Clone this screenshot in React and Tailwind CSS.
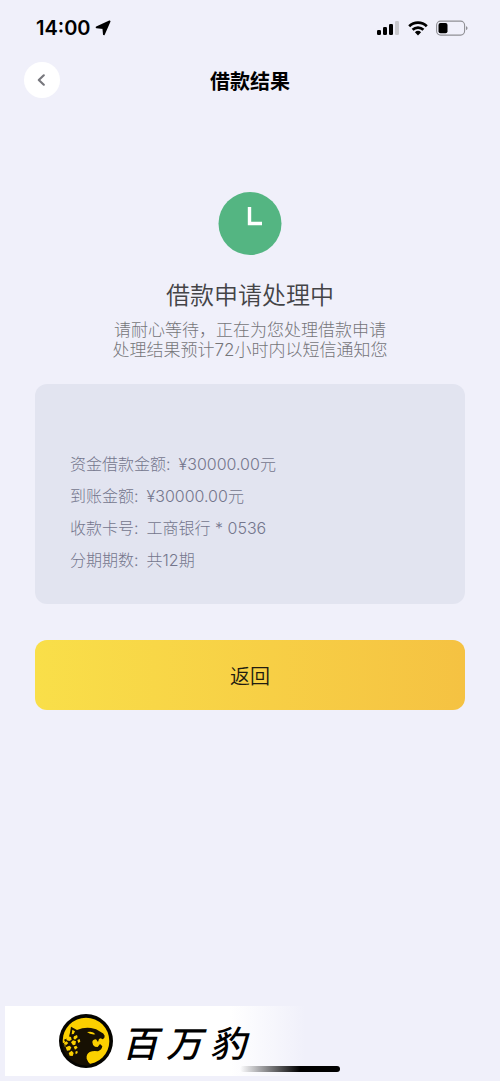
import React from "react";

const details = [
  ["资金借款金额", "¥30000.00元"],
  ["到账金额", "¥30000.00元"],
  ["收款卡号", "工商银行 * 0536"],
  ["分期期数", "共12期"],
];

function StatusBar() {
  return (
    <div className="flex h-14 items-center justify-between pr-8 pl-9">
      <div className="flex items-center gap-1 font-['Inter','Noto_Sans_CJK_SC',sans-serif] text-xl font-semibold text-black">
        <span>14:00</span>
        <svg className="h-4 w-4" viewBox="0 0 16 16" aria-hidden="true">
          <path
            d="M14.6 1.4 8.9 14.3 8.3 8.2 1.6 7.4Z"
            stroke="#000"
            strokeWidth="1.8"
            strokeLinejoin="round"
          />
        </svg>
      </div>
      <div className="flex items-center gap-2">
        <svg className="h-4 w-6" viewBox="0 0 24 16" aria-hidden="true">
          <rect x="1" y="10" width="4" height="5" rx="1.2" />
          <rect x="7" y="7" width="4" height="8" rx="1.2" />
          <rect x="13" y="4" width="4" height="11" rx="1.2" />
          <rect x="19" y="1" width="4" height="14" rx="1.2" fill="#c9c9ce" />
        </svg>
        <svg className="h-4 w-5" viewBox="0 0 20 16" aria-hidden="true">
          <g fill="none" stroke="#000" strokeWidth="2.7">
            <path d="M1.2 6.3a12.6 12.6 0 0 1 17.6 0" />
            <path d="M4.6 9.8a7.7 7.7 0 0 1 10.8 0" />
          </g>
          <path d="M6.9 12.3a4.5 4.5 0 0 1 6.2 0L10 15.5Z" />
        </svg>
        <svg className="h-4 w-8" viewBox="0 0 32 16" aria-hidden="true">
          <rect x=".6" y="1.1" width="28" height="14" rx="4" fill="none" stroke="#8f8f94" strokeWidth="1.1" />
          <rect x="2.5" y="3" width="9" height="10.3" rx="2" />
          <path d="M30 6.3c2 .4 2 3.4 0 3.8Z" fill="#8f8f94" />
        </svg>
      </div>
    </div>
  );
}

function PantherLogo() {
  return (
    <svg className="size-14 shrink-0" viewBox="4 4 168 168" role="img" aria-label="百万豹">
      <circle cx="88" cy="88" r="81" fill="#050400" />
      <circle cx="88" cy="88" r="70" fill="#fcd000" />
      <path
        fill="#171003"
        d="M43 45 61 55Q82 46 103 49Q120 51 131 60Q142 64 144 72Q145 79 138 83L132 80L127 82L124 91L118 83Q108 83 107 91Q107 101 115 105L123 106L130 97L137 104Q136 114 124 119Q109 117 99 121Q88 127 90 141Q93 151 103 160Q80 165 58 154Q33 142 20 115Q16 103 18 95L26 92L22 84L36 78L40 63Z"
      />
      <path d="m91 61 10-1q10 1 15 8-15 2-25-7Z" fill="#fcd000" />
      <g fill="#fcd000">
        <path d="m47 54 8 5-4 8-6 1ZM29 81l6-7 8 2 2 8-7 4-8-2ZM52 74l9-4 2 7-8 7-5-4ZM24 92l5-3 6 5-6 6-8-2ZM43 92l6-6 9 3-2 10-7 2ZM62 85l7-3 2 8-6 4ZM27 107l11-5 6 5-4 9-9 1ZM51 105l8-3 4 6-8 6ZM36 124l9-7 6 7-3 9-9-1ZM56 120l6-3 1 7-6 4ZM22 103l4-3 1 5Z" />
      </g>
    </svg>
  );
}

export default function App() {
  return (
    <div className="flex min-h-screen flex-col bg-[#f0f0fa] font-['Inter','Noto_Sans_CJK_SC',sans-serif]">
      <StatusBar />
      <header className="grid h-12 grid-cols-[1fr_auto_1fr] items-center px-6">
        <button type="button" aria-label="返回上一页" className="flex size-9 items-center justify-center rounded-full bg-white">
          <svg className="size-4" viewBox="0 0 16 16" fill="none" stroke="#77777d" strokeWidth="2.2" strokeLinecap="round" strokeLinejoin="round" aria-hidden="true">
            <path d="m9.8 3.3-5 4.7 5 4.7" />
          </svg>
        </button>
        <h1 className="pt-1 text-xl font-bold text-black">借款结果</h1>
      </header>

      <main className="flex flex-col px-[35px] pt-22">
        <svg className="size-16 self-center" viewBox="0 0 64 64" aria-hidden="true">
          <circle cx="32" cy="31.5" r="31.5" fill="#54b582" />
          <path d="M31.5 15v16.5H44" fill="none" stroke="#fff" strokeWidth="3.4" />
        </svg>
        <h2 className="mt-5 text-center text-2xl leading-10 font-[350] text-[#444447]">借款申请处理中</h2>
        <p className="mt-1 text-center text-[17px] leading-5 font-light text-[#757579]">
          请耐心等待，正在为您处理借款申请
          <br />
          处理结果预计72小时内以短信通知您
        </p>
        <dl className="mt-6 rounded-xl bg-[#e2e4f0] px-[35px] pt-16 pb-7 text-base leading-8 font-light text-[#74768d]">
          {details.map(([label, value]) => (
            <div key={label} className="flex gap-2">
              <dt>{label}:</dt>
              <dd>{value}</dd>
            </div>
          ))}
        </dl>
        <button type="button" className="mt-9 h-[70px] rounded-xl bg-linear-to-r from-[#f9df49] to-[#f5c242] pt-1 text-xl font-[350] text-[#211b10]">
          返回
        </button>
      </main>

      <footer className="relative mt-auto pb-[5px] pl-[5px]">
        <div className="flex h-[70px] w-[300px] items-center gap-2 bg-linear-to-r from-white from-75% to-[#f0f0fa] pl-[53px]">
          <PantherLogo />
          <div className="flex gap-2 font-['Noto_Sans_CJK_SC',sans-serif] text-4xl leading-none font-medium text-black italic">
            <span>百</span>
            <span>万</span>
            <span>豹</span>
          </div>
        </div>
        <div className="absolute bottom-[9px] left-60 h-1.5 w-25 rounded-full bg-linear-to-r from-transparent to-black to-60%" />
      </footer>
    </div>
  );
}
